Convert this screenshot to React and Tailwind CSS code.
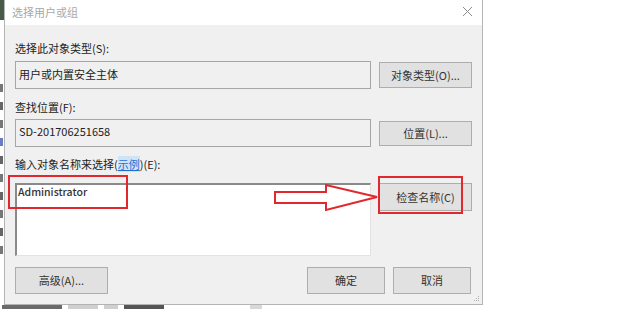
export default function App() {
  const font = { fontFamily: '"Noto Sans CJK SC", "Noto Sans", sans-serif' };
  const btn =
    "flex items-center justify-center border border-[#adadad] bg-[#e1e1e1] text-[11px] text-[#333]";

  return (
    <div className="relative h-[309px] w-[620px] overflow-hidden bg-white" style={font}>
      <div className="flex h-[305px]">
        {/* sliver of the window behind */}
        <div className="flex w-[4px] flex-col overflow-hidden bg-white">
          <div className="h-[20px] w-full bg-[#4a5a48]" />
          <div className="mt-[64px] flex flex-col gap-[10px]">
            <div className="h-[8px] w-[3px] bg-[#777]" />
            <div className="h-[8px] w-[3px] bg-[#666]" />
            <div className="h-[8px] w-[3px] bg-[#777]" />
            <div className="h-[8px] w-[3px] bg-[#6b7fc0]" />
            <div className="h-[8px] w-[3px] bg-[#666]" />
            <div className="h-[8px] w-[3px] bg-[#777]" />
            <div className="h-[8px] w-[3px] bg-[#666]" />
            <div className="h-[8px] w-[3px] bg-[#777]" />
            <div className="h-[8px] w-[3px] bg-[#666]" />
            <div className="h-[8px] w-[3px] bg-[#777]" />
          </div>
        </div>

        {/* dialog */}
        <div className="flex w-[479px] flex-col border-r border-b border-l border-[#b4b4b4]">
          <div className="flex h-[25px] items-center justify-between bg-white pl-[7px] pr-[9px]">
            <span className="text-[11px] text-[#a8a8a8]">选择用户或组</span>
            <svg width="11" height="11" viewBox="0 0 11 11" className="-mt-[2px]">
              <path d="M1 1 L10 10 M10 1 L1 10" stroke="#8a8a8a" strokeWidth="1" />
            </svg>
          </div>

          <div className="relative flex flex-1 flex-col bg-[#f0f0f0] pl-[10px]">
            <div className="mt-[16px] text-[11px] leading-[14px] text-[#222]">选择此对象类型(S):</div>
            <div className="mt-[6px] flex items-center gap-[8px]">
              <div className="flex h-[28px] w-[356px] items-start border border-[#a6a6a6] bg-[#f0f0f0] pl-[3px] pt-[4px] text-[11px] text-[#222]">
                用户或内置安全主体
              </div>
              <div className={`${btn} h-[26px] w-[93px]`}>对象类型(O)...</div>
            </div>

            <div className="mt-[11px] text-[11px] leading-[14px] text-[#222]">查找位置(F):</div>
            <div className="mt-[5px] flex items-center gap-[8px]">
              <div className="flex h-[28px] w-[356px] items-start border border-[#a6a6a6] bg-[#f0f0f0] pl-[3px] pt-[3px] text-[11px] text-[#222]">
                SD-201706251658
              </div>
              <div className={`${btn} h-[25px] w-[93px]`}>位置(L)...</div>
            </div>

            <div className="mt-[10px] text-[11px] leading-[14px] text-[#222]">
              输入对象名称来选择(
              <span className="bg-[#cfe3f7] text-[#1f6fd0] underline">示例</span>
              )(E):
            </div>
            <div className="mt-[12px] flex items-start gap-[8px]">
              <div className="h-[73px] w-[356px] border-t-2 border-l-2 border-t-[#8a8a8a] border-l-[#8a8a8a] border-r border-b border-r-[#e3e3e3] border-b-[#e3e3e3] bg-white pl-[1px] text-[10.5px] font-medium leading-[14px] text-[#333]">
                Administrator
              </div>
              <div className={`${btn} h-[28px] w-[93px]`}>检查名称(C)</div>
            </div>

            <div className="mt-[11px] flex items-center">
              <div className={`${btn} h-[27px] w-[93px]`}>高级(A)...</div>
              <div className="ml-[199px] flex gap-[8px]">
                <div className={`${btn} h-[27px] w-[78px]`}>确定</div>
                <div className={`${btn} h-[27px] w-[78px]`}>取消</div>
              </div>
            </div>

            <svg width="6" height="6" viewBox="0 0 6 6" className="absolute right-[2px] bottom-[2px]">
              <rect x="4" y="0" width="1" height="1" fill="#b0b0b0" />
              <rect x="2" y="2" width="1" height="1" fill="#b0b0b0" />
              <rect x="4" y="2" width="1" height="1" fill="#b0b0b0" />
              <rect x="0" y="4" width="1" height="1" fill="#b0b0b0" />
              <rect x="2" y="4" width="1" height="1" fill="#b0b0b0" />
              <rect x="4" y="4" width="1" height="1" fill="#b0b0b0" />
            </svg>
          </div>
        </div>
      </div>

      {/* behind-window strip below the dialog */}
      <div className="flex h-[4px] items-start gap-[6px] overflow-hidden pl-[2px]">
        <div className="h-[4px] w-[60px] bg-[#6a6a6a]" />
        <div className="h-[4px] w-[30px] bg-[#cfcfcf]" />
        <div className="h-[4px] w-[14px] bg-[#cfcfcf]" />
        <div className="h-[4px] w-[40px] bg-[#555]" />
        <div className="ml-[80px] h-[4px] w-[12px] bg-[#d8d8d8]" />
      </div>

      {/* red annotations */}
      <div className="absolute left-[8px] top-[175px] h-[34px] w-[120px] border-2 border-[#e0282e]" />
      <div className="absolute left-[378px] top-[176px] h-[38px] w-[85px] border-2 border-[#e0282e]" />
      <svg
        width="108"
        height="32"
        viewBox="0 0 108 32"
        className="absolute left-[272px] top-[182px]"
      >
        <path
          d="M3 10 L54 10 L54 3 L105 15 L54 28 L54 21 L3 21 Z"
          fill="white"
          stroke="#e0282e"
          strokeWidth="2"
          strokeLinejoin="miter"
        />
      </svg>
    </div>
  );
}
